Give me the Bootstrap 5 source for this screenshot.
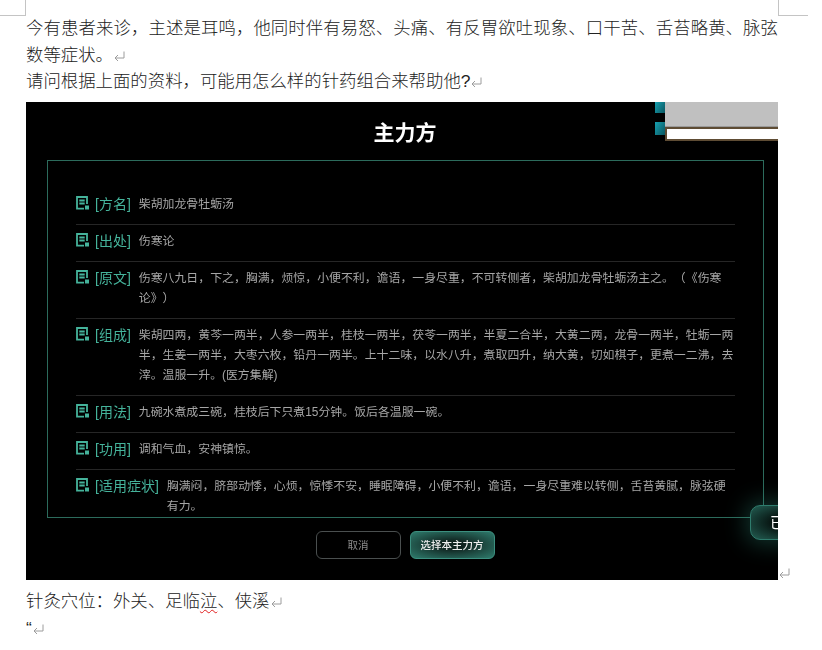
<!DOCTYPE html>
<html lang="zh">
<head>
  <meta charset="UTF-8">
  <title>主力方</title>
  <link href="https://cdn.jsdelivr.net/npm/bootstrap@5.3.0/dist/css/bootstrap.min.css" rel="stylesheet"/>
  <style>
    body { background: #fff; color: #222; font-family: "Liberation Sans", "Noto Sans CJK SC", sans-serif; text-spacing-trim: space-all; }
    .doc-page { padding: 15px 44px 0 26px; position: relative; width: 822px; height: 650px; overflow: hidden; }
    .doc-text { font-size: 17.4px; font-weight: 300; line-height: 26.5px; margin: 0; text-align: justify; }
    .crop-mark { position: absolute; top: 0; height: 16px; border-bottom: 1px solid #c4c4c4; }
    .crop-l { left: 0; width: 26px; border-right: 1px solid #c4c4c4; }
    .crop-r { left: 778px; width: 30px; border-left: 1px solid #c4c4c4; }
    .para-mark { width: 12px; height: 12px; vertical-align: -1px; }
    .shot-wrap { position: relative; margin: 7.5px 0 8px; }
    .shot-mark { position: absolute; left: 100%; bottom: 1px; }
    .shot { background: #000; height: 478px; overflow: hidden; position: relative; filter: blur(.4px); }
    .shot-title { color: #fff; font-size: 21px; font-weight: 700; line-height: 62px; height: 58px; margin-left: 6px; }
    .herb-panel { border: 1px solid #2c6b5c; height: 358px; margin: 0 14px 0 21px; padding: 27px 28px 0; overflow: hidden; }
    .herb-row { border-bottom: 1px solid #262626; padding: 6px 0 10px; gap: 8px; line-height: 20px; }
    .herb-row:last-child { border-bottom: 0; }
    .herb-label { color: #45b39b; font-size: 14px; white-space: nowrap; gap: 6px; }
    .herb-icon { width: 13px; height: 14px; margin-top: 2px; }
    .herb-text { color: #a6a6a6; font-size: 11.9px; flex: 1; }
    .shot-actions { gap: 9px; margin-top: 13px; padding-left: 6px; }
    .shot-btn { width: 85px; height: 28px; padding: 0; font-size: 10.5px; line-height: 26px; border-radius: 6px; }
    .shot-cancel { background: #000; border: 1px solid #4a4f4f; color: #8b8b8b; }
    .shot-ok { background: radial-gradient(ellipse at center, #10231f 20%, #2f7c6d 100%); border: 1px solid #3c8f7f; color: #eee; font-weight: 500; }
    .glow-btn { position: absolute; left: 724px; top: 403px; width: 80px; height: 35px; border-radius: 10px; border: 1px solid #2f7c6d; background: radial-gradient(ellipse at center, #06120f 30%, #245f54 100%); box-shadow: 0 0 22px 4px rgba(50,150,130,.35); color: #fff; font-size: 15px; line-height: 33px; padding-left: 19px; }
    .top-bar { position: absolute; left: 639px; width: 113px; top: 0; }
    .top-gray { background: #c0c0c0; height: 25px; border-bottom: 1px solid #9a9a9a; }
    .top-white { background: #fff; height: 14px; border: 2px solid #5e4c34; border-right: 0; }
    .top-tab { position: absolute; left: 629px; width: 10px; background: linear-gradient(120deg, #16a0b0, #0b5660); }
    .tab-a { top: 0; height: 11px; }
    .tab-b { top: 20px; height: 13px; }
    .spell { text-decoration: underline wavy #e02020; text-decoration-thickness: 1px; text-underline-offset: 2px; }
  </style>
</head>
<body>
<svg width="0" height="0" class="d-block position-absolute">
  <symbol id="ret" viewBox="0 0 12 12"><path d="M11 1.500V8H2M5 5 2 8l3 3" fill="none" stroke="#9c9c9c" stroke-width="1"/></symbol>
  <symbol id="doc" viewBox="0 0 13 14"><path d="M8 12.700H1V1h10v7M3.300 4.500h5.400M3.300 7.500h5.400" fill="none" stroke="#45b39b" stroke-width="1.800"/><rect x="9" y="9.500" width="4" height="4" fill="#45b39b"/></symbol>
</svg>
<div class="doc-page">
  <div class="crop-mark crop-l"></div>
  <div class="crop-mark crop-r"></div>
  <p class="doc-text">今有患者来诊，主述是耳鸣，他同时伴有易怒、头痛、有反胃欲吐现象、口干苦、舌苔略黄、脉弦数等症状。<svg class="para-mark"><use href="#ret"/></svg></p>
  <p class="doc-text">请问根据上面的资料，可能用怎么样的针药组合来帮助他?<svg class="para-mark"><use href="#ret"/></svg></p>

  <div class="shot-wrap">
    <div class="shot">
      <div class="shot-title text-center">主力方</div>
      <div class="herb-panel">
        <div class="herb-row d-flex">
          <div class="herb-label d-flex"><svg class="herb-icon"><use href="#doc"/></svg><span>[方名]</span></div>
          <div class="herb-text">柴胡加龙骨牡蛎汤</div>
        </div>
        <div class="herb-row d-flex">
          <div class="herb-label d-flex"><svg class="herb-icon"><use href="#doc"/></svg><span>[出处]</span></div>
          <div class="herb-text">伤寒论</div>
        </div>
        <div class="herb-row d-flex">
          <div class="herb-label d-flex"><svg class="herb-icon"><use href="#doc"/></svg><span>[原文]</span></div>
          <div class="herb-text">伤寒八九日，下之，胸满，烦惊，小便不利，谵语，一身尽重，不可转侧者，柴胡加龙骨牡蛎汤主之。（《伤寒<br>论》）</div>
        </div>
        <div class="herb-row d-flex">
          <div class="herb-label d-flex"><svg class="herb-icon"><use href="#doc"/></svg><span>[组成]</span></div>
          <div class="herb-text">柴胡四两，黄芩一两半，人参一两半，桂枝一两半，茯苓一两半，半夏二合半，大黄二两，龙骨一两半，牡蛎一两半，生姜一两半，大枣六枚，铅丹一两半。上十二味，以水八升，煮取四升，纳大黄，切如棋子，更煮一二沸，去滓。温服一升。(医方集解)</div>
        </div>
        <div class="herb-row d-flex">
          <div class="herb-label d-flex"><svg class="herb-icon"><use href="#doc"/></svg><span>[用法]</span></div>
          <div class="herb-text">九碗水煮成三碗，桂枝后下只煮15分钟。饭后各温服一碗。</div>
        </div>
        <div class="herb-row d-flex">
          <div class="herb-label d-flex"><svg class="herb-icon"><use href="#doc"/></svg><span>[功用]</span></div>
          <div class="herb-text">调和气血，安神镇惊。</div>
        </div>
        <div class="herb-row d-flex">
          <div class="herb-label d-flex"><svg class="herb-icon"><use href="#doc"/></svg><span>[适用症状]</span></div>
          <div class="herb-text">胸满闷，脐部动悸，心烦，惊悸不安，睡眠障碍，小便不利，谵语，一身尽重难以转侧，舌苔黄腻，脉弦硬有力。</div>
        </div>
      </div>
      <div class="shot-actions d-flex justify-content-center">
        <button type="button" class="btn shot-btn shot-cancel">取消</button>
        <button type="button" class="btn shot-btn shot-ok">选择本主力方</button>
      </div>
      <div class="top-tab tab-a"></div>
      <div class="top-tab tab-b"></div>
      <div class="top-bar"><div class="top-gray"></div><div class="top-white"></div></div>
      <div class="glow-btn">已</div>
    </div>
    <svg class="para-mark shot-mark"><use href="#ret"/></svg>
  </div>

  <p class="doc-text">针灸穴位：外关、足临<span class="spell">泣</span>、侠溪<svg class="para-mark"><use href="#ret"/></svg></p>
  <p class="doc-text">“<svg class="para-mark"><use href="#ret"/></svg></p>
</div>
<script src="https://cdn.jsdelivr.net/npm/bootstrap@5.3.0/dist/js/bootstrap.bundle.min.js"></script>
</body>
</html>
